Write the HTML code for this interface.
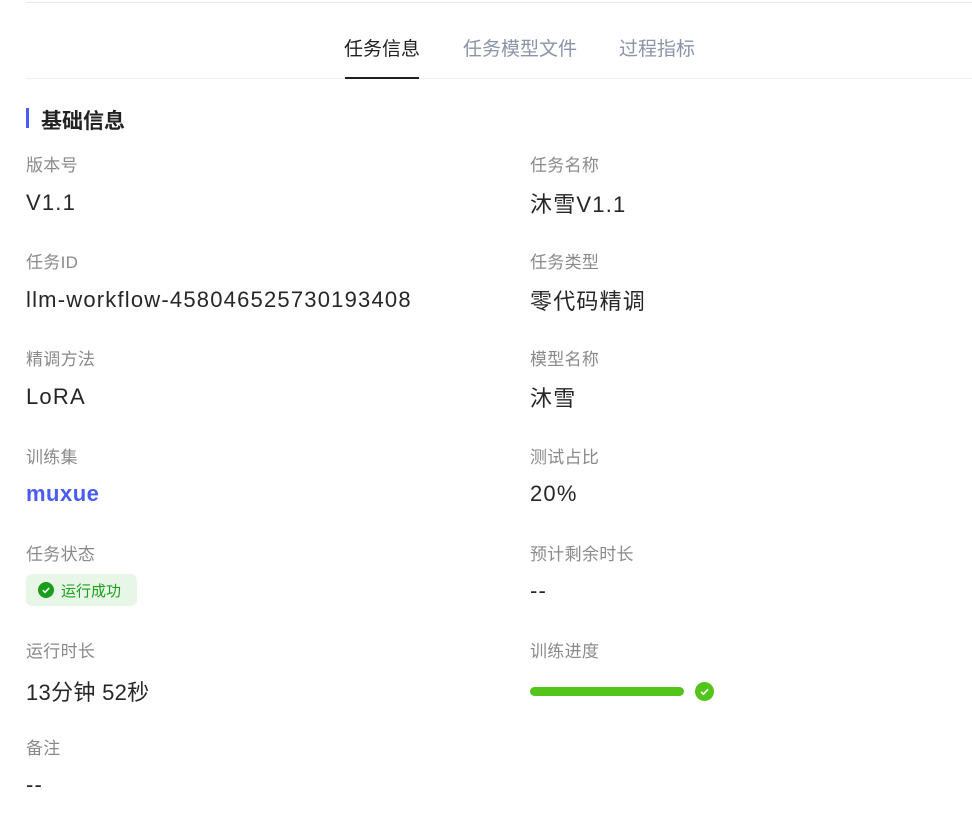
<!DOCTYPE html>
<html><head><meta charset="utf-8"><style>
body{margin:0;width:972px;height:831px;background:#fff;position:relative;overflow:hidden;font-family:"Liberation Sans","Noto Sans CJK SC",sans-serif}
.a{position:absolute;white-space:nowrap}
.l{font-size:17px;color:#8a8a8a;letter-spacing:0.3px}
.v{font-size:22px;color:#262626;letter-spacing:1.2px}
</style></head><body>
<div class="a" style="left:26px;top:2px;width:946px;height:1px;background:#e6e8fb"></div>
<div class="a" style="left:26px;top:78px;width:946px;height:1px;background:#eeeeee"></div>
<div class="a" style="left:344px;top:34px;font-size:19px;color:#1f1f1f">任务信息</div>
<div class="a" style="left:345px;top:77px;width:74px;height:2px;background:#1f1f1f"></div>
<div class="a" style="left:463px;top:34px;font-size:19px;color:#8a93a8">任务模型文件</div>
<div class="a" style="left:619px;top:34px;font-size:19px;color:#8a93a8">过程指标</div>
<div class="a" style="left:26px;top:108px;width:3px;height:20px;background:#4b5cf5"></div>
<div class="a" style="left:41px;top:105px;font-size:21px;font-weight:bold;color:#222">基础信息</div>

<div class="a l" style="left:26px;top:151px">版本号</div>
<div class="a v" style="left:26px;top:190px">V1.1</div>
<div class="a l" style="left:530px;top:151px">任务名称</div>
<div class="a v" style="left:530px;top:187px">沐雪V1.1</div>

<div class="a l" style="left:26px;top:248px">任务ID</div>
<div class="a v" style="left:26px;top:287px">llm-workflow-458046525730193408</div>
<div class="a l" style="left:530px;top:248px">任务类型</div>
<div class="a v" style="left:530px;top:284px">零代码精调</div>

<div class="a l" style="left:26px;top:345px">精调方法</div>
<div class="a v" style="left:26px;top:384px">LoRA</div>
<div class="a l" style="left:530px;top:345px">模型名称</div>
<div class="a v" style="left:530px;top:381px">沐雪</div>

<div class="a l" style="left:26px;top:443px">训练集</div>
<div class="a v" style="left:26px;top:481px;color:#4b5cf5;font-weight:bold;letter-spacing:0.5px">muxue</div>
<div class="a l" style="left:530px;top:443px">测试占比</div>
<div class="a v" style="left:530px;top:481px">20%</div>

<div class="a l" style="left:26px;top:540px">任务状态</div>
<div class="a" style="left:26px;top:574px;width:111px;height:32px;border-radius:6px;background:#e8f6e8"></div>
<svg class="a" style="left:38px;top:582px" width="16" height="16" viewBox="0 0 16 16"><circle cx="8" cy="8" r="8" fill="#1a9e1a"/><path d="M4.8 8.2l2.2 2.2 4.2-4.5" stroke="#fff" stroke-width="1.6" fill="none"/></svg>
<div class="a" style="left:61px;top:580px;font-size:15px;color:#1a9e1a">运行成功</div>
<div class="a l" style="left:530px;top:540px">预计剩余时长</div>
<div class="a v" style="left:530px;top:578px">--</div>

<div class="a l" style="left:26px;top:637px">运行时长</div>
<div class="a v" style="left:26px;top:675px;letter-spacing:0.3px">13分钟 52秒</div>
<div class="a l" style="left:530px;top:637px">训练进度</div>
<div class="a" style="left:530px;top:687px;width:154px;height:9px;border-radius:5px;background:#52c41a"></div>
<svg class="a" style="left:695px;top:682px" width="19" height="19" viewBox="0 0 19 19"><circle cx="9.5" cy="9.5" r="9.5" fill="#52c41a"/><path d="M6 9.8l2.4 2.4 4.6-5" stroke="#fff" stroke-width="1.6" fill="none"/></svg>

<div class="a l" style="left:26px;top:734px">备注</div>
<div class="a v" style="left:26px;top:772px">--</div>
</body></html>
